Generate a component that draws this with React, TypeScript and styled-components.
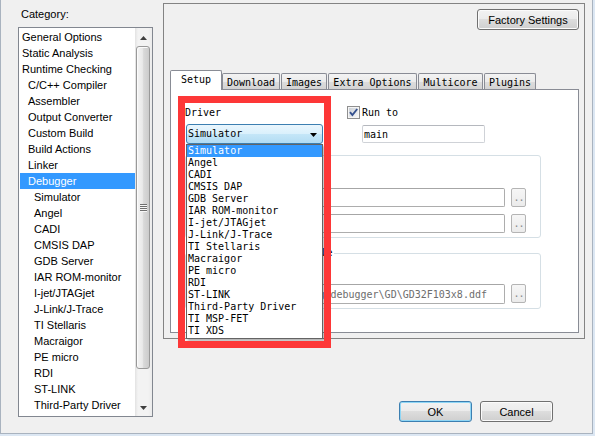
import React from "react";
import styled, { createGlobalStyle } from "styled-components";

const UI = `"Liberation Sans", Tahoma, Arial, sans-serif`;
const MONO = `"DejaVu Sans Mono", "Liberation Mono", monospace`;

const GlobalStyle = createGlobalStyle`
  html, body {
    margin: 0;
    padding: 0;
    background: #dce7f3;
  }
  body {
    width: 595px;
    height: 436px;
    overflow: hidden;
  }
  * {
    box-sizing: border-box;
  }
`;

const Client = styled.div`
  width: 593px;
  height: 434px;
  background: #f0f0f0;
  border-left: 1px solid #a9b3bf;
  border-right: 1px solid #a9b3bf;
  border-bottom: 1px solid #a9b3bf;
  display: flex;
  align-items: flex-start;
  padding: 3px 0 0 17px;
  font-family: ${UI};
  font-size: 11px;
  color: #000;
`;

/* ---------- category list ---------- */

const CategoryColumn = styled.div`
  width: 135px;
  display: flex;
  flex-direction: column;
`;

const CategoryLabel = styled.div`
  margin: 4px 0 6px 3px;
  height: 14px;
  line-height: 14px;
`;

const ListBox = styled.div`
  height: 390px;
  border: 1px solid #828790;
  background: #fff;
  display: flex;
`;

const ListItems = styled.div`
  width: 116px;
  padding: 1px 0 0 1px;
`;

const ListRow = styled.div<{ $level: number; $selected?: boolean }>`
  height: 16px;
  line-height: 16px;
  padding-left: ${(p) => 2 + p.$level * 6}px;
  background: ${(p) => (p.$selected ? "#3399ff" : "transparent")};
  color: ${(p) => (p.$selected ? "#fff" : "#000")};
  white-space: nowrap;
`;

const ScrollBar = styled.div`
  width: 17px;
  display: flex;
  flex-direction: column;
  background: linear-gradient(to right, #e2e2e2 0, #f3f3f3 3px, #f3f3f3 13px, #ebebeb 17px);
`;

const ScrollArrow = styled.div<{ $up?: boolean }>`
  height: 17px;
  display: flex;
  justify-content: center;
  align-items: center;
  padding-top: ${(p) => (p.$up ? 3 : 0)}px;
`;

const ScrollTrack = styled.div`
  flex: 1;
  padding-top: 1px;
`;

const Thumb = styled.div`
  height: 323px;
  margin: 0 2px 0 1px;
  border: 1px solid #999;
  border-radius: 3px;
  background: linear-gradient(to right, #f4f4f4 0%, #e9e9e9 45%, #d9d9d9 55%, #cbcbcb 100%);
  box-shadow: inset 1px 1px 0 #fbfbfb;
  display: flex;
  justify-content: center;
  align-items: center;
`;

const Grip = styled.div`
  width: 7px;
  height: 8px;
  background: repeating-linear-gradient(to bottom, #6f6f6f 0 1px, #f7f7f7 1px 2px);
`;

/* ---------- right side ---------- */

const RightColumn = styled.div`
  margin-left: 10px;
  width: 422px;
  display: flex;
  flex-direction: column;
`;

const OptionsBox = styled.div`
  height: 336px;
  border: 1px solid #838383;
  display: flex;
  flex-direction: column;
`;

const TopBar = styled.div`
  display: flex;
  justify-content: flex-end;
  padding: 5px 5px 0 0;
`;

const PushButton = styled.button<{ $w: number; $default?: boolean }>`
  width: ${(p) => p.$w}px;
  height: 21px;
  padding: 0;
  border: 1px solid ${(p) => (p.$default ? "#3c7fb1" : "#707070")};
  border-radius: 3px;
  background: linear-gradient(#f2f2f2 0%, #ebebeb 49%, #dddddd 50%, #cfcfcf 100%);
  box-shadow: inset 0 0 0 1px ${(p) => (p.$default ? "#8fd6f5" : "#fbfbfb")};
  font-family: ${UI};
  font-size: 11px;
  color: #000;
`;

const TabRow = styled.div`
  margin: 40px 0 0 6px;
  height: 19px;
  display: flex;
  align-items: flex-end;
  gap: 1px;
  position: relative;
  z-index: 1;
`;

const Tab = styled.div<{ $w: number; $active?: boolean }>`
  width: ${(p) => p.$w}px;
  height: ${(p) => (p.$active ? 20 : 16)}px;
  margin-bottom: ${(p) => (p.$active ? -1 : 0)}px;
  margin-right: ${(p) => (p.$active ? -1 : 0)}px;
  padding-top: ${(p) => (p.$active ? 0 : 2)}px;
  border: 1px solid #898c95;
  border-bottom: none;
  border-radius: 2px 2px 0 0;
  background: ${(p) =>
    p.$active ? "#fff" : "linear-gradient(#f3f3f3 0%, #ebebeb 50%, #dddddd 51%, #d3d3d3 100%)"};
  font-family: ${MONO};
  font-size: 10px;
  line-height: ${(p) => (p.$active ? 18 : 14)}px;
  text-align: center;
  white-space: nowrap;
`;

const TabPanel = styled.div`
  position: relative;
  margin-left: 6px;
  width: 409px;
  height: 244px;
  border: 1px solid #898c95;
  background: #fff;
  padding: 15px 0 0 14px;
  font-family: ${MONO};
  font-size: 10px;
`;

const SetupRow = styled.div`
  display: flex;
  align-items: flex-start;
`;

const DriverColumn = styled.div`
  width: 138px;
  display: flex;
  flex-direction: column;
`;

const FieldLabel = styled.div`
  padding-top: 1px;
  line-height: 14px;
  margin-bottom: 4px;
`;

const ComboWrap = styled.div`
  position: relative;
  margin-left: 1px;
  width: 137px;
  height: 20px;
`;

const Combo = styled.div`
  height: 20px;
  border: 1px solid #3c7fb1;
  border-radius: 3px;
  background: linear-gradient(#eaf6fd 0%, #d9f0fc 50%, #c4e6f8 51%, #b2dcf3 100%);
  display: flex;
  justify-content: space-between;
  align-items: center;
  padding: 0 5px 0 1px;
  line-height: 14px;

  svg {
    margin-top: 2px;
  }
`;

const DropList = styled.div`
  position: absolute;
  top: 100%;
  left: 0;
  width: 137px;
  border: 1px solid #646464;
  background: #fff;
  padding-bottom: 1px;
  box-shadow: 2px 2px 2px rgba(0, 0, 0, 0.25);
  z-index: 2;
`;

const DropItem = styled.div<{ $selected?: boolean }>`
  height: 12px;
  line-height: 12px;
  padding-left: 1px;
  background: ${(p) => (p.$selected ? "#3399ff" : "transparent")};
  color: ${(p) => (p.$selected ? "#fff" : "#000")};
  white-space: nowrap;
`;

const RunToColumn = styled.div`
  margin-left: 24px;
  display: flex;
  flex-direction: column;
`;

const CheckRow = styled.div`
  display: flex;
  align-items: flex-start;
  gap: 2px;
  height: 15px;
  padding-top: 1px;
`;

const CheckLabel = styled.span`
  line-height: 14px;
  white-space: nowrap;
`;

const TextBox = styled.div<{ $w: number; $h: number; $muted?: boolean }>`
  width: ${(p) => p.$w}px;
  height: ${(p) => p.$h}px;
  border: 1px solid ${(p) => (p.$muted ? "#adadad" : "#cfd2d7")};
  border-top-color: ${(p) => (p.$muted ? "#a6a6a6" : "#b5b8be")};
  border-radius: 2px;
  background: #fff;
  color: ${(p) => (p.$muted ? "#6d6d6d" : "#000")};
  display: flex;
  align-items: center;
  padding-left: ${(p) => (p.$muted ? 3 : 1)}px;
  white-space: nowrap;
  overflow: hidden;
`;

const MainBox = styled(TextBox)`
  margin: 5px 0 0 15px;
`;

const Group = styled.div<{ $gap: number }>`
  width: 356px;
  margin-top: ${(p) => p.$gap}px;
  border: 1px solid #d5dfe5;
  border-radius: 3px;
  padding: 0 14px 4px 14px;
`;

const GroupTitle = styled.div`
  width: fit-content;
  min-width: 8px;
  height: 12px;
  line-height: 12px;
  margin: -7px 0 0 -8px;
  padding: 0 2px;
  background: #fff;
  white-space: nowrap;
`;

/* the option checkbox of each group; its caption sits under the open list */
const GroupCheck = styled.div`
  display: flex;
  align-items: center;
  height: 14px;
  margin-top: 5px;
`;

const FileRow = styled.div<{ $gap: number }>`
  display: flex;
  align-items: flex-start;
  gap: 6px;
  margin-top: ${(p) => p.$gap}px;
`;

const BrowseButton = styled.div`
  width: 15px;
  height: 19px;
  border: 1px solid #b4b4b4;
  border-radius: 2px;
  background: linear-gradient(#f6f6f6, #ebebeb);
  color: #8a8a8a;
  font-size: 10px;
  line-height: 17px;
  text-align: center;
  letter-spacing: -1px;
`;

const Highlight = styled.div`
  position: absolute;
  left: 7px;
  top: 6px;
  width: 153px;
  height: 252px;
  border: 7px solid #fd3737;
  pointer-events: none;
  z-index: 3;
`;

const DialogButtons = styled.div`
  margin-top: 62px;
  display: flex;
  justify-content: flex-end;
  gap: 8px;
  padding-right: 32px;
`;

/* ---------- drawings ---------- */

const CheckBox = ({ checked }: { checked?: boolean }) => (
  <svg width="13" height="13" viewBox="0 0 13 13">
    <defs>
      <linearGradient id={checked ? "cbOn" : "cbOff"} x1="0" y1="0" x2="1" y2="1">
        <stop offset="0" stopColor="#cbd0d6" />
        <stop offset="1" stopColor="#f7f7f7" />
      </linearGradient>
    </defs>
    <rect x="0.5" y="0.5" width="12" height="12" fill="#f5f5f5" stroke="#8f8f8f" />
    <rect x="2" y="2" width="9" height="9" fill={`url(#${checked ? "cbOn" : "cbOff"})`} />
    {checked && (
      <path d="M3 6.2 L5.4 9 L10.2 3" fill="none" stroke="#34508e" strokeWidth="1.9" />
    )}
  </svg>
);

const ArrowDown = ({ color }: { color: string }) => (
  <svg width="7" height="4" viewBox="0 0 7 4">
    <path d="M0 0 H7 L3.5 4 Z" fill={color} />
  </svg>
);

const ArrowUp = ({ color }: { color: string }) => (
  <svg width="7" height="4" viewBox="0 0 7 4">
    <path d="M3.5 0 L7 4 H0 Z" fill={color} />
  </svg>
);

/* ---------- data ---------- */

const categories: { name: string; level: number; selected?: boolean }[] = [
  { name: "General Options", level: 0 },
  { name: "Static Analysis", level: 0 },
  { name: "Runtime Checking", level: 0 },
  { name: "C/C++ Compiler", level: 1 },
  { name: "Assembler", level: 1 },
  { name: "Output Converter", level: 1 },
  { name: "Custom Build", level: 1 },
  { name: "Build Actions", level: 1 },
  { name: "Linker", level: 1 },
  { name: "Debugger", level: 1, selected: true },
  { name: "Simulator", level: 2 },
  { name: "Angel", level: 2 },
  { name: "CADI", level: 2 },
  { name: "CMSIS DAP", level: 2 },
  { name: "GDB Server", level: 2 },
  { name: "IAR ROM-monitor", level: 2 },
  { name: "I-jet/JTAGjet", level: 2 },
  { name: "J-Link/J-Trace", level: 2 },
  { name: "TI Stellaris", level: 2 },
  { name: "Macraigor", level: 2 },
  { name: "PE micro", level: 2 },
  { name: "RDI", level: 2 },
  { name: "ST-LINK", level: 2 },
  { name: "Third-Party Driver", level: 2 },
];

const tabs = [
  { name: "Setup", w: 52, active: true },
  { name: "Download", w: 58 },
  { name: "Images", w: 46 },
  { name: "Extra Options", w: 89 },
  { name: "Multicore", w: 65 },
  { name: "Plugins", w: 52 },
];

const drivers = [
  "Simulator",
  "Angel",
  "CADI",
  "CMSIS DAP",
  "GDB Server",
  "IAR ROM-monitor",
  "I-jet/JTAGjet",
  "J-Link/J-Trace",
  "TI Stellaris",
  "Macraigor",
  "PE micro",
  "RDI",
  "ST-LINK",
  "Third-Party Driver",
  "TI MSP-FET",
  "TI XDS",
];

export default function App() {
  return (
    <>
      <GlobalStyle />
      <Client>
        <CategoryColumn>
          <CategoryLabel>Category:</CategoryLabel>
          <ListBox>
            <ListItems>
              {categories.map((c) => (
                <ListRow key={c.name} $level={c.level} $selected={c.selected}>
                  {c.name}
                </ListRow>
              ))}
            </ListItems>
            <ScrollBar>
              <ScrollArrow $up>
                <ArrowUp color="#404040" />
              </ScrollArrow>
              <ScrollTrack>
                <Thumb>
                  <Grip />
                </Thumb>
              </ScrollTrack>
              <ScrollArrow>
                <ArrowDown color="#404040" />
              </ScrollArrow>
            </ScrollBar>
          </ListBox>
        </CategoryColumn>

        <RightColumn>
          <OptionsBox>
            <TopBar>
              <PushButton $w={102}>Factory Settings</PushButton>
            </TopBar>

            <TabRow>
              {tabs.map((t) => (
                <Tab key={t.name} $w={t.w} $active={t.active}>
                  {t.name}
                </Tab>
              ))}
            </TabRow>

            <TabPanel>
              <SetupRow>
                <DriverColumn>
                  <FieldLabel>Driver</FieldLabel>
                  <ComboWrap>
                    <Combo>
                      <span>Simulator</span>
                      <ArrowDown color="#000" />
                    </Combo>
                    <DropList>
                      {drivers.map((d, i) => (
                        <DropItem key={d} $selected={i === 0}>
                          {d}
                        </DropItem>
                      ))}
                    </DropList>
                  </ComboWrap>
                </DriverColumn>
                <RunToColumn>
                  <CheckRow>
                    <CheckBox checked />
                    <CheckLabel>Run to</CheckLabel>
                  </CheckRow>
                  <MainBox $w={123} $h={18}>
                    main
                  </MainBox>
                </RunToColumn>
              </SetupRow>

              <Group $gap={11}>
                <GroupTitle />
                <GroupCheck>
                  <CheckBox />
                </GroupCheck>
                <FileRow $gap={8}>
                  <TextBox $w={305} $h={19} $muted />
                  <BrowseButton>..</BrowseButton>
                </FileRow>
                <FileRow $gap={7}>
                  <TextBox $w={305} $h={19} $muted />
                  <BrowseButton>..</BrowseButton>
                </FileRow>
              </Group>

              <Group $gap={15}>
                <GroupTitle>Device description file</GroupTitle>
                <GroupCheck>
                  <CheckBox />
                </GroupCheck>
                <FileRow $gap={6}>
                  <TextBox $w={305} $h={20} $muted>
                    $TOOLKIT_DIR$\config\debugger\GD\GD32F103x8.ddf
                  </TextBox>
                  <BrowseButton>..</BrowseButton>
                </FileRow>
              </Group>

              <Highlight />
            </TabPanel>
          </OptionsBox>

          <DialogButtons>
            <PushButton $w={73} $default>
              OK
            </PushButton>
            <PushButton $w={73}>Cancel</PushButton>
          </DialogButtons>
        </RightColumn>
      </Client>
    </>
  );
}
